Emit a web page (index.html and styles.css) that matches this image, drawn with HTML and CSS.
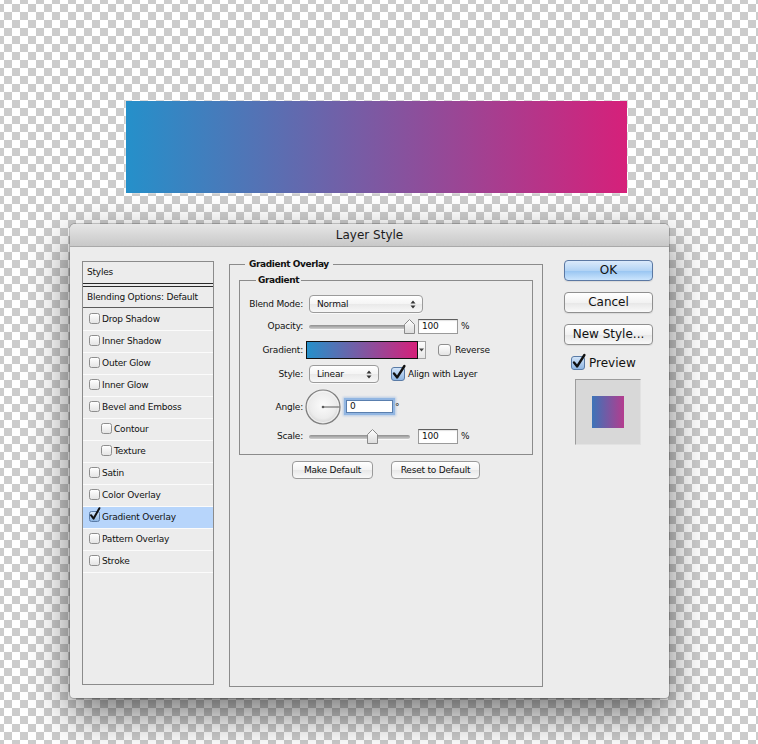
FILE: index.html
```html
<!DOCTYPE html>
<html>
<head>
<meta charset="utf-8">
<title>Layer Style</title>
<link rel="stylesheet" href="styles.css">
</head>
<body>
<div class="canvas">
  <div class="bar"></div>
  <div class="dialog">
    <div class="titlebar">Layer Style</div>
    <div class="dbody">
      <div class="styles">
        <div class="hdr">Styles</div>
        <div class="blend">Blending Options: Default</div>
        <div class="row first"><span class="cb"></span><span>Drop Shadow</span></div>
        <div class="row"><span class="cb"></span><span>Inner Shadow</span></div>
        <div class="row"><span class="cb"></span><span>Outer Glow</span></div>
        <div class="row"><span class="cb"></span><span>Inner Glow</span></div>
        <div class="row"><span class="cb"></span><span>Bevel and Emboss</span></div>
        <div class="row sub"><span class="cb"></span><span>Contour</span></div>
        <div class="row sub"><span class="cb"></span><span>Texture</span></div>
        <div class="row"><span class="cb"></span><span>Satin</span></div>
        <div class="row"><span class="cb"></span><span>Color Overlay</span></div>
        <div class="row sel"><span class="cb on"><svg class="chk" width="12" height="14" viewBox="0 0 12 14"><path d="M2 8.2 L4.6 11.6 L10.4 1.2" fill="none" stroke="#111" stroke-width="2" stroke-linecap="round" stroke-linejoin="round"/></svg></span><span>Gradient Overlay</span></div>
        <div class="row"><span class="cb"></span><span>Pattern Overlay</span></div>
        <div class="row"><span class="cb"></span><span>Stroke</span></div>
      </div>

      <fieldset class="outer">
        <legend>Gradient Overlay</legend>
        <fieldset class="inner">
          <legend>Gradient</legend>
          <div class="form">
            <div class="lbl">Blend Mode:</div>
            <div class="ctl">
              <div class="select wide"><span>Normal</span><svg class="arr" width="6" height="9" viewBox="0 0 6 9"><path d="M0.5 3.6 L3 0.6 L5.5 3.6 Z M0.5 5.4 L3 8.4 L5.5 5.4 Z" fill="#333"/></svg></div>
            </div>

            <div class="lbl">Opacity:</div>
            <div class="ctl">
              <div class="slider op"><div class="track"></div><svg class="thumb" style="left:95px" width="11" height="15" viewBox="0 0 11 15"><defs><linearGradient id="tg1" x1="0" y1="0" x2="0" y2="1"><stop offset="0" stop-color="#ffffff"/><stop offset="1" stop-color="#dcdcdc"/></linearGradient></defs><path d="M0.5 14.5 V5.5 L5.5 0.5 L10.5 5.5 V14.5 Z" fill="url(#tg1)" stroke="#8a8a8a"/></svg></div>
              <div class="num op-num">100</div><span class="pct">%</span>
            </div>

            <div class="lbl">Gradient:</div>
            <div class="ctl">
              <div class="swatch"></div><div class="drop"><svg width="5" height="4" viewBox="0 0 5 4"><path d="M0 0.5 H5 L2.5 3.5 Z" fill="#444"/></svg></div>
              <span class="cb mid"></span><span class="txt rev">Reverse</span>
            </div>

            <div class="lbl">Style:</div>
            <div class="ctl">
              <div class="select narrow"><span>Linear</span><svg class="arr" width="6" height="9" viewBox="0 0 6 9"><path d="M0.5 3.6 L3 0.6 L5.5 3.6 Z M0.5 5.4 L3 8.4 L5.5 5.4 Z" fill="#333"/></svg></div>
              <span class="cb big on align"><svg class="chk" width="16" height="18" viewBox="0 0 16 18"><path d="M3 10.5 L6.2 14.4 L13.4 3" fill="none" stroke="#111" stroke-width="2.4" stroke-linecap="round" stroke-linejoin="round"/></svg></span><span class="txt al">Align with Layer</span>
            </div>

            <div class="lbl">Angle:</div>
            <div class="ctl">
              <svg class="dial" width="36" height="36" viewBox="0 0 36 36"><defs><radialGradient id="dg" cx="0.5" cy="0.45" r="0.55"><stop offset="0" stop-color="#fbfbfb"/><stop offset="0.7" stop-color="#ececec"/><stop offset="1" stop-color="#d2d2d2"/></radialGradient></defs><circle cx="18" cy="18" r="17" fill="url(#dg)" stroke="#7d7d7d" stroke-width="1.2"/><circle cx="18" cy="18" r="15.6" fill="none" stroke="#ffffff" stroke-opacity="0.7" stroke-width="0.8"/><line x1="18" y1="18" x2="34.5" y2="18" stroke="#5a5a5a" stroke-width="1"/><circle cx="18" cy="18" r="1.3" fill="#5a5a5a"/></svg>
              <div class="num angle">0</div><span class="deg">°</span>
            </div>

            <div class="lbl">Scale:</div>
            <div class="ctl">
              <div class="slider sc"><div class="track"></div><svg class="thumb" style="left:58px" width="11" height="15" viewBox="0 0 11 15"><defs><linearGradient id="tg2" x1="0" y1="0" x2="0" y2="1"><stop offset="0" stop-color="#ffffff"/><stop offset="1" stop-color="#dcdcdc"/></linearGradient></defs><path d="M0.5 14.5 V5.5 L5.5 0.5 L10.5 5.5 V14.5 Z" fill="url(#tg2)" stroke="#8a8a8a"/></svg></div>
              <div class="num sc-num">100</div><span class="pct">%</span>
            </div>
          </div>
        </fieldset>
        <div class="btns">
          <div class="sbtn w1">Make Default</div>
          <div class="sbtn w2">Reset to Default</div>
        </div>
      </fieldset>

      <div class="actions">
        <div class="btn ok">OK</div>
        <div class="btn">Cancel</div>
        <div class="btn">New Style...</div>
        <div class="prev-row"><span class="cb big on"><svg class="chk" width="16" height="18" viewBox="0 0 16 18"><path d="M3 10.5 L6.2 14.4 L13.4 3" fill="none" stroke="#111" stroke-width="2.4" stroke-linecap="round" stroke-linejoin="round"/></svg></span><span>Preview</span></div>
        <div class="prev-box"><div class="prev-sw"></div></div>
      </div>
    </div>
  </div>
</div>
</body>
</html>
```
FILE: styles.css
```css
* { box-sizing: border-box; }
html, body { margin: 0; padding: 0; }
body {
  width: 758px;
  height: 744px;
  overflow: hidden;
  font-family: "DejaVu Sans", "Liberation Sans", sans-serif;
  color: #111;
}
.canvas {
  width: 758px;
  height: 744px;
  display: flow-root;
  background-color: #fff;
  background-image: repeating-conic-gradient(#cccccc 0 25%, #ffffff 0 50%);
  background-size: 16px 16px;
  background-position: 4px 4px;
}
.bar {
  margin: 101px 0 0 126px;
  width: 501px;
  height: 92px;
  background: linear-gradient(90deg, #2590ca 0%, #d6207a 100%);
  box-shadow: 0 0 0 1px rgba(255,255,255,0.3);
}
.dialog {
  margin: 31px 0 0 70px;
  width: 599px;
  height: 474px;
  background: #ececec;
  border-radius: 5px 5px 4px 4px;
  box-shadow: 0 16px 40px rgba(0,0,0,0.55), 0 0 0 1px rgba(0,0,0,0.18);
}
.titlebar {
  height: 23px;
  border-radius: 5px 5px 0 0;
  background: linear-gradient(#e6e6e6, #c8c8c8);
  border-bottom: 1px solid #a9a9a9;
  text-align: center;
  font-size: 12px;
  line-height: 22px;
  color: #1c1c1c;
}
.dbody {
  display: flex;
  align-items: flex-start;
  padding: 14px 0 0 12px;
}

/* styles list */
.styles {
  width: 132px;
  height: 424px;
  border: 1px solid #8b8b8b;
  font-size: 9px;
  letter-spacing: -0.2px;
  flex-shrink: 0;
}
.hdr {
  height: 22px;
  line-height: 21px;
  padding-left: 4px;
  border-bottom: 1px solid #2a2a2a;
  margin-bottom: 2px;
}
.blend {
  height: 22px;
  line-height: 20px;
  padding-left: 4px;
  border-top: 1px solid #2a2a2a;
  border-bottom: 1px solid #5a5a5a;
}
.row {
  height: 22px;
  display: flex;
  align-items: center;
  gap: 2px;
  padding-left: 6px;
  padding-bottom: 2px;
  border-bottom: 1px solid #fbfbfb;
}
.row.first { height: 23px; padding-bottom: 1px; }
.row.sub { padding-left: 18px; }
.row.sel { background: #b7d5fb; }

.cb {
  position: relative;
  display: inline-block;
  flex-shrink: 0;
  width: 11px;
  height: 11px;
  border: 1px solid #8e8e8e;
  border-radius: 2.5px;
  background: linear-gradient(#ffffff, #e4e4e4);
}
.cb.on {
  border-color: #5a7ba6;
  background: linear-gradient(#d2e4f8, #8fb6e3);
}
.cb.mid { width: 13px; height: 12px; margin-left: 12px; border-radius: 3px; }
.cb.big { width: 14px; height: 14px; border-radius: 3px; }
.chk {
  position: absolute;
  left: -1px;
  top: -5px;
  overflow: visible;
}
.cb.big .chk { left: -1px; top: -5px; }

/* groups */
fieldset { margin: 0; min-width: 0; }
.outer {
  width: 314px;
  height: 429px;
  margin: -3px 0 0 15px;
  border: 1px solid #8b8b8b;
  padding: 4px 9px 0 9px;
  flex-shrink: 0;
}
.outer > legend {
  font-size: 9px;
  font-weight: bold;
  letter-spacing: -0.4px;
  line-height: 12px;
  padding: 0 4px;
  margin-left: 6px;
}
.inner {
  border: 1px solid #8b8b8b;
  padding: 6px 0 10px 0;
}
.inner > legend {
  font-size: 9px;
  font-weight: bold;
  letter-spacing: -0.4px;
  line-height: 12px;
  padding: 0 2px;
  margin-left: 16px;
}
.form {
  display: grid;
  grid-template-columns: 63px 1fr;
  grid-template-rows: 23px 22px 25px 23px 43px 16px;
  column-gap: 6px;
  align-items: center;
  font-size: 9px;
  letter-spacing: -0.2px;
}
.lbl { text-align: right; }
.ctl { display: flex; align-items: center; }

.select {
  position: relative;
  height: 18px;
  border: 1px solid #9b9b9b;
  border-radius: 4px;
  background: linear-gradient(#ffffff, #f4f4f4 50%, #e9e9e9 51%, #f7f7f7);
  box-shadow: 0 1px 0 rgba(255,255,255,0.7);
  display: flex;
  align-items: center;
  padding-left: 7px;
}
.select.wide { width: 114px; }
.select.narrow { width: 70px; }
.arr { position: absolute; right: 6px; top: 4px; }

.slider { position: relative; height: 15px; flex-shrink: 0; }
.slider.op { width: 104px; }
.slider.sc { width: 101px; }
.track {
  position: absolute;
  left: 0; right: 0;
  top: 6px;
  height: 4px;
  border-radius: 2px;
  background: linear-gradient(#8f8f8f, #cfcfcf);
  box-shadow: 0 1px 0 #fafafa;
}
.thumb { position: absolute; top: 0; }

.num {
  height: 15px;
  width: 40px;
  background: #fff;
  border: 1px solid #9a9a9a;
  border-top-color: #5f5f5f;
  box-shadow: inset 0 1px 1px rgba(0,0,0,0.12);
  padding-left: 3px;
  line-height: 13px;
}
.op-num { margin-left: 5px; }
.sc-num { margin-left: 8px; }
.pct { margin-left: 3px; }

.swatch {
  margin-left: -3px;
  width: 112px;
  height: 18px;
  border: 1px solid #111;
  background: linear-gradient(90deg, #2590ca, #d6207a);
}
.drop {
  width: 8px;
  height: 18px;
  border: 1px solid #a3a3a3;
  border-left: none;
  background: linear-gradient(#fdfdfd, #e6e6e6);
  display: flex;
  align-items: center;
  justify-content: center;
}
.txt.rev { margin-left: 4px; }
.cb.align { margin-left: 12px; }
.txt.al { margin-left: 3px; }

.dial { margin-left: -4px; flex-shrink: 0; }
.num.angle {
  margin-left: 5px;
  width: 47px;
  height: 13px;
  line-height: 11px;
  border: 1px solid #5a7fae;
  box-shadow: 0 0 0 2px #92b6e2, 0 0 2px 3px rgba(120,165,220,0.45);
}
.deg { margin-left: 2px; align-self: flex-start; margin-top: 13px; }

.btns {
  display: flex;
  justify-content: center;
  gap: 18px;
  margin-top: 6px;
}
.sbtn {
  height: 18px;
  border: 1px solid #9a9a9a;
  border-radius: 4px;
  background: linear-gradient(#ffffff, #f3f3f3 50%, #e8e8e8 51%, #f8f8f8);
  font-size: 9px;
  letter-spacing: -0.2px;
  line-height: 16px;
  text-align: center;
}
.sbtn.w1 { width: 81px; }
.sbtn.w2 { width: 89px; }

/* right column */
.actions {
  margin: -1px 0 0 21px;
  width: 89px;
  display: flex;
  flex-direction: column;
  flex-shrink: 0;
}
.btn {
  height: 21px;
  border: 1px solid #8f8f8f;
  border-radius: 4px;
  background: linear-gradient(#ffffff, #f2f2f2 50%, #e6e6e6 51%, #f9f9f9);
  font-size: 12px;
  line-height: 19px;
  text-align: center;
  box-shadow: 0 1px 1px rgba(0,0,0,0.08);
}
.btn + .btn { margin-top: 11px; }
.btn.ok {
  border-color: #5b78a3;
  background: linear-gradient(#dbeafb, #b3d4f5 50%, #97c4f1 51%, #cbe5fd);
}
.prev-row {
  margin-top: 11px;
  height: 14px;
  padding-left: 7px;
  display: flex;
  align-items: center;
  gap: 4px;
  font-size: 12px;
}
.prev-box {
  margin: 9px 0 0 11px;
  width: 66px;
  height: 66px;
  background: #d8d8d8;
  border: 1px solid;
  border-color: #9c9c9c #e2e2e2 #e2e2e2 #9c9c9c;
  display: flex;
  align-items: center;
  justify-content: center;
}
.prev-sw {
  width: 32px;
  height: 32px;
  background: linear-gradient(90deg, #3c74b8, #b43c8e);
}
```
